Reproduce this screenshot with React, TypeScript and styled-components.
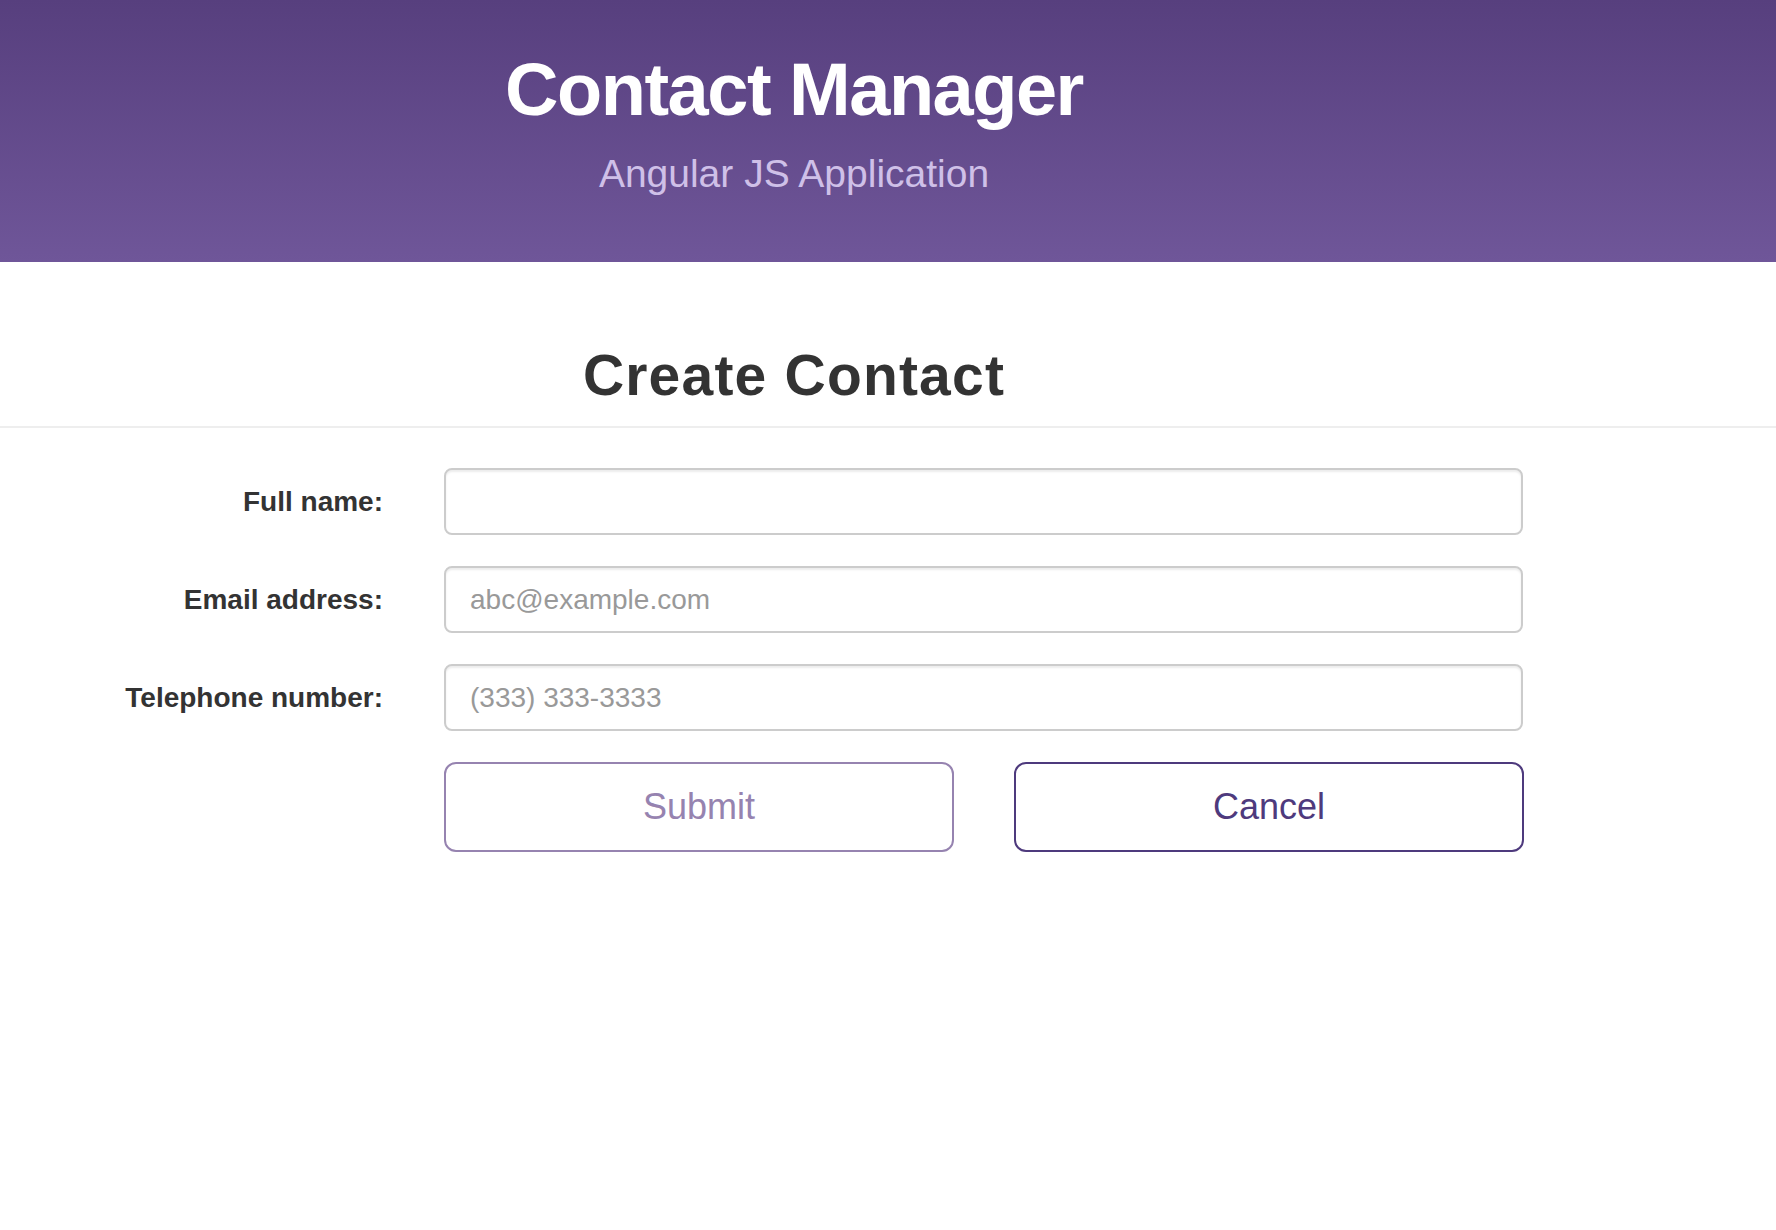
import React from "react";
import styled, { createGlobalStyle } from "styled-components";

const GlobalStyle = createGlobalStyle`
  html, body {
    margin: 0;
    padding: 0;
    background: #ffffff;
    font-family: "Liberation Sans", Arial, Helvetica, sans-serif;
    color: #333333;
  }
  * { box-sizing: border-box; }
`;

const Header = styled.header`
  height: 262px;
  padding-top: 53px;
  background: linear-gradient(to bottom, #573f7e 0%, #6f5699 100%);
`;

const HeaderInner = styled.div`
  width: 1588px;
  display: flex;
  flex-direction: column;
  align-items: center;
  gap: 27px;
`;

const AppTitle = styled.h1`
  margin: 0;
  font-size: 74px;
  line-height: 74px;
  font-weight: 700;
  letter-spacing: -1.5px;
  color: #ffffff;
`;

const AppSubtitle = styled.p`
  margin: 0;
  font-size: 39px;
  line-height: 39px;
  font-weight: 400;
  letter-spacing: 0px;
  color: #cfc0e8;
`;

const PageHeading = styled.div`
  margin-top: 85px;
  padding-bottom: 22px;
  border-bottom: 2px solid #eeeeee;
`;

const PageTitle = styled.h2`
  width: 1588px;
  margin: 0;
  text-align: center;
  font-size: 57px;
  line-height: 57px;
  font-weight: 700;
  letter-spacing: 1.2px;
  color: #333333;
`;

const Form = styled.form`
  margin-top: 40px;
  display: flex;
  flex-direction: column;
  gap: 31px;
`;

const FieldRow = styled.div`
  display: grid;
  grid-template-columns: 383px 1079px;
  column-gap: 61px;
  align-items: center;
`;

const Label = styled.label`
  text-align: right;
  font-size: 28px;
  line-height: 28px;
  font-weight: 700;
  color: #333333;
`;

const Input = styled.input`
  width: 100%;
  height: 67px;
  padding: 0 24px;
  border: 2px solid #cccccc;
  border-radius: 8px;
  box-shadow: inset 0 2px 2px rgba(0, 0, 0, 0.075);
  font-family: "Liberation Sans", Arial, Helvetica, sans-serif;
  font-size: 28px;
  color: #555555;
  background: #ffffff;
  outline: none;
  &::placeholder {
    color: #999999;
  }
`;

const ButtonRow = styled.div`
  display: grid;
  grid-template-columns: 510px 510px;
  column-gap: 60px;
  margin-left: 444px;
`;

const Button = styled.button<{ $tone: "muted" | "strong" }>`
  height: 90px;
  border-radius: 12px;
  background: #ffffff;
  font-family: "Liberation Sans", Arial, Helvetica, sans-serif;
  font-size: 36px;
  font-weight: 400;
  cursor: pointer;
  border: 2px solid ${(p) => (p.$tone === "muted" ? "#9683b0" : "#4e3a7d")};
  color: ${(p) => (p.$tone === "muted" ? "#9683b0" : "#4e3a7d")};
`;

export default function App() {
  return (
    <>
      <GlobalStyle />
      <Header>
        <HeaderInner>
          <AppTitle>Contact Manager</AppTitle>
          <AppSubtitle>Angular JS Application</AppSubtitle>
        </HeaderInner>
      </Header>
      <PageHeading>
        <PageTitle>Create Contact</PageTitle>
      </PageHeading>
      <Form onSubmit={(e) => e.preventDefault()}>
        <FieldRow>
          <Label htmlFor="fullname">Full name:</Label>
          <Input id="fullname" type="text" />
        </FieldRow>
        <FieldRow>
          <Label htmlFor="email">Email address:</Label>
          <Input id="email" type="email" placeholder="abc@example.com" />
        </FieldRow>
        <FieldRow>
          <Label htmlFor="phone">Telephone number:</Label>
          <Input id="phone" type="tel" placeholder="(333) 333-3333" />
        </FieldRow>
        <ButtonRow>
          <Button type="submit" $tone="muted">Submit</Button>
          <Button type="button" $tone="strong">Cancel</Button>
        </ButtonRow>
      </Form>
    </>
  );
}
